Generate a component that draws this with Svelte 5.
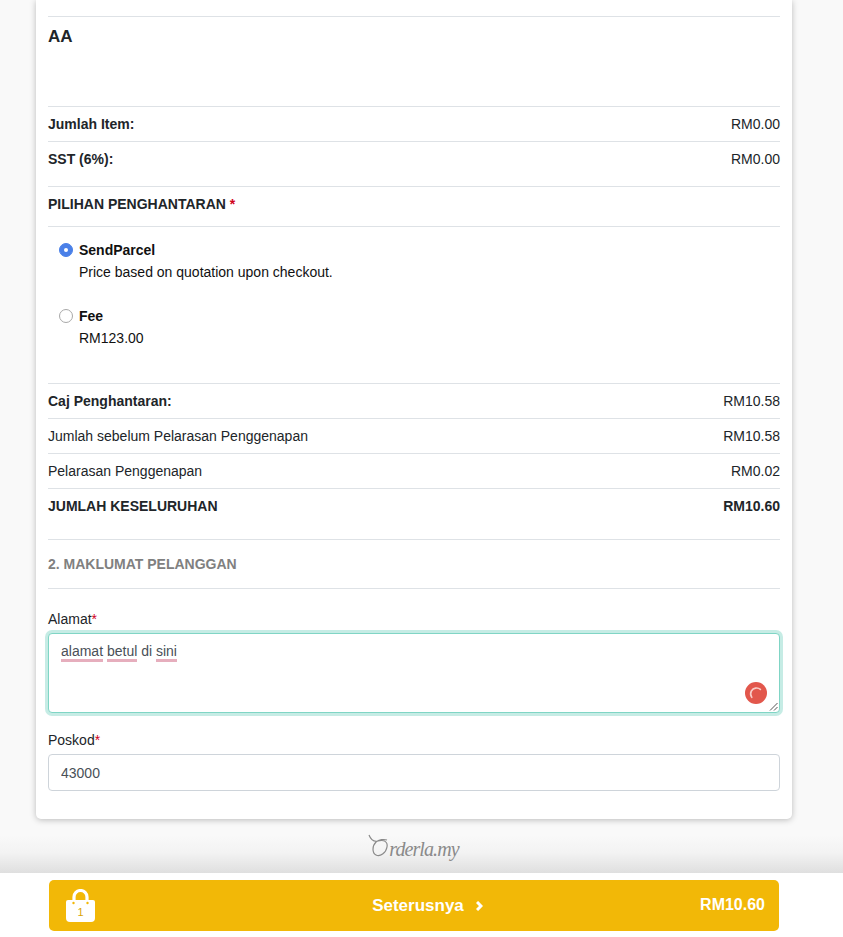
<script>
	const summary = [
		{ label: 'Caj Penghantaran:', value: 'RM10.58', bold: true },
		{ label: 'Jumlah sebelum Pelarasan Penggenapan', value: 'RM10.58' },
		{ label: 'Pelarasan Penggenapan', value: 'RM0.02' }
	];
</script>

<div class="page">
	<main class="card">
		<div class="item">AA</div>

		<div class="row"><strong>Jumlah Item:</strong><span>RM0.00</span></div>
		<div class="row sst"><strong>SST (6%):</strong><span>RM0.00</span></div>

		<h3 class="ship-title">PILIHAN PENGHANTARAN <span class="req">*</span></h3>

		<div class="options">
			<div class="option">
				<span class="radio checked"></span>
				<div>
					<strong>SendParcel</strong>
					<p>Price based on quotation upon checkout.</p>
				</div>
			</div>
			<div class="option">
				<span class="radio"></span>
				<div>
					<strong>Fee</strong>
					<p>RM123.00</p>
				</div>
			</div>
		</div>

		{#each summary as row}
			<div class="row">
				{#if row.bold}<strong>{row.label}</strong>{:else}<span>{row.label}</span>{/if}
				<span>{row.value}</span>
			</div>
		{/each}
		<div class="row total"><strong>JUMLAH KESELURUHAN</strong><strong>RM10.60</strong></div>

		<h3 class="section">2. MAKLUMAT PELANGGAN</h3>

		<div class="field">
			<label for="alamat">Alamat<span class="req">*</span></label>
			<div class="textarea" id="alamat">
				<span class="typo">alamat</span> <span class="typo">betul</span> di <span class="typo">sini</span>
				<span class="badge">
					<svg width="22" height="22" viewBox="0 0 22 22">
						<circle cx="11" cy="11" r="11" fill="#e2574c" />
						<path d="M15.4 7.4A6 6 0 0 0 6.4 9A6 6 0 0 0 6.8 15.4" fill="none" stroke="#f8cdc8" stroke-width="1.6" stroke-linecap="round" />
					</svg>
				</span>
				<svg class="grip" width="9" height="9" viewBox="0 0 9 9">
					<path d="M1 8.5L8.5 1M5 8.5L8.5 5" stroke="#555" stroke-width="1" />
				</svg>
			</div>
		</div>

		<div class="field postcode">
			<label for="poskod">Poskod<span class="req">*</span></label>
			<input id="poskod" value="43000" />
		</div>
	</main>

	<div class="brand">
		<svg class="swash" width="24" height="26" viewBox="0 0 24 26">
			<path d="M1 1C3 6 6 8 10 7C16 5 20 8 19 13C18 19 12 23 8 21C4 19 4 12 8 8C11 5.5 16 5 19 6" fill="none" stroke="#8a8a8a" stroke-width="1.2" />
		</svg>
		<span class="wordmark">rderla.my</span>
	</div>

	<footer class="bar">
		<button class="next">
			<span class="bag">
				<svg width="29" height="33" viewBox="0 0 29 33">
					<path d="M8 13V8a6.5 6.5 0 0 1 13 0v5" fill="none" stroke="#fff" stroke-width="3.2" />
					<path d="M2 11h25a2 2 0 0 1 2 2v16a4 4 0 0 1-4 4H4a4 4 0 0 1-4-4V13a2 2 0 0 1 2-2z" fill="#fff" />
					<circle cx="7.5" cy="14" r="1.2" fill="#f2b807" />
					<circle cx="21.5" cy="14" r="1.2" fill="#f2b807" />
				</svg>
				<span class="count">1</span>
			</span>
			<span class="label">Seterusnya
				<svg width="7" height="10" viewBox="0 0 7 10"><path d="M1 1L5 5L1 9" fill="none" stroke="#fff" stroke-width="3" /></svg>
			</span>
			<span class="amount">RM10.60</span>
		</button>
	</footer>
</div>

<style>
	:global(body) {
		margin: 0;
		background: #f9f9f9;
		color: #212529;
		font-family: 'Liberation Sans', Arial, sans-serif;
		font-size: 14px;
		line-height: 21px;
	}

	.page {
		display: flex;
		flex-direction: column;
		height: 937px;
		overflow: hidden;
	}

	.card {
		position: relative;
		z-index: 1;
		width: 756px;
		height: 819px;
		flex: none;
		box-sizing: border-box;
		margin-left: 36px;
		padding: 16px 12px 0;
		background: #fff;
		border-radius: 0 0 5px 5px;
		box-shadow: 0 1px 6px rgba(0, 0, 0, 0.25);
	}

	.item {
		height: 90px;
		box-sizing: border-box;
		border-top: 1px solid #dee2e6;
		padding-top: 9px;
		font-size: 17px;
		font-weight: 700;
		line-height: 22px;
	}

	.row {
		display: flex;
		justify-content: space-between;
		align-items: center;
		height: 35px;
		box-sizing: border-box;
		border-top: 1px solid #dee2e6;
	}

	.sst {
		height: 45px;
		align-items: flex-start;
		padding-top: 7px;
	}

	.total {
		height: 51px;
		align-items: flex-start;
		padding-top: 7px;
	}

	h3 {
		margin: 0;
		font-size: 14px;
		font-weight: 700;
		box-sizing: border-box;
		border-top: 1px solid #dee2e6;
	}

	.ship-title {
		height: 41px;
		padding-top: 7px;
		border-bottom: 1px solid #dee2e6;
	}

	.req {
		color: #d0021b;
	}

	.options {
		height: 156px;
		box-sizing: border-box;
		padding: 13px 0 0 11px;
		color: #111;
	}

	.option {
		display: flex;
		gap: 6px;
		height: 66px;
	}

	.option p {
		margin: 1px 0 0;
	}

	.radio {
		width: 14px;
		height: 14px;
		flex: none;
		box-sizing: border-box;
		margin-top: 3px;
		border-radius: 50%;
		border: 1px solid #a8a8a8;
		background: #fff;
		position: relative;
	}

	.radio.checked {
		border-color: #4a80e8;
		background: #4a80e8;
	}

	.radio.checked::after {
		content: '';
		position: absolute;
		left: 4px;
		top: 4px;
		width: 4px;
		height: 4px;
		border-radius: 50%;
		background: #fff;
	}

	.section {
		height: 50px;
		padding-top: 14px;
		color: #808080;
		border-bottom: 1px solid #dee2e6;
	}

	.field label {
		display: block;
		height: 21px;
	}

	.field {
		margin-top: 20px;
	}

	.textarea {
		position: relative;
		height: 80px;
		box-sizing: border-box;
		margin-top: 3px;
		padding: 7px 12px;
		border: 1px solid #80d5c5;
		border-radius: 4px;
		box-shadow: 0 0 0 3px rgba(128, 213, 197, 0.45);
		color: #495057;
		background: #fff;
	}

	.typo {
		border-bottom: 3px solid #e6aebd;
	}

	.badge {
		position: absolute;
		right: 12px;
		bottom: 8px;
		display: flex;
	}

	.grip {
		position: absolute;
		right: 1px;
		bottom: 1px;
	}

	.postcode {
		margin-top: 17px;
	}

	input {
		display: block;
		width: 100%;
		height: 37px;
		box-sizing: border-box;
		margin-top: 3px;
		padding: 0 12px;
		border: 1px solid #ced4da;
		border-radius: 4px;
		color: #495057;
		font: inherit;
		outline: 0;
	}

	.brand {
		flex: 1;
		display: flex;
		justify-content: center;
		align-items: flex-start;
		padding: 15px 16px 0 0;
		box-sizing: border-box;
		background: linear-gradient(#f9f9f9 0 30%, #f3f3f3 62%, #dfdfdf 100%);
		color: #8a8a8a;
	}

	.swash {
		margin-right: -3px;
	}

	.wordmark {
		font-family: 'Liberation Serif', serif;
		font-style: italic;
		font-size: 20px;
		letter-spacing: -0.9px;
		line-height: 30px;
	}

	.bar {
		height: 64px;
		flex: none;
		box-sizing: border-box;
		padding: 7px 64px 6px 49px;
		background: #fff;
	}

	.next {
		display: grid;
		grid-template-columns: 1fr auto 1fr;
		align-items: center;
		width: 730px;
		height: 51px;
		padding: 0 14px 0 17px;
		border: 0;
		border-radius: 5px;
		background: #f2b807;
		color: #fff;
		font-family: inherit;
		font-weight: 700;
	}

	.bag {
		position: relative;
		justify-self: start;
		display: flex;
		width: 29px;
	}

	.count {
		position: absolute;
		left: 0;
		right: 0;
		top: 16px;
		color: #d9a406;
		font-size: 11px;
		font-weight: 400;
		line-height: 14px;
		text-align: center;
	}

	.label {
		display: flex;
		align-items: center;
		gap: 12px;
		padding-left: 24px;
		font-size: 17px;
	}

	.amount {
		justify-self: end;
		font-size: 16px;
		margin-top: -2px;
	}
</style>
